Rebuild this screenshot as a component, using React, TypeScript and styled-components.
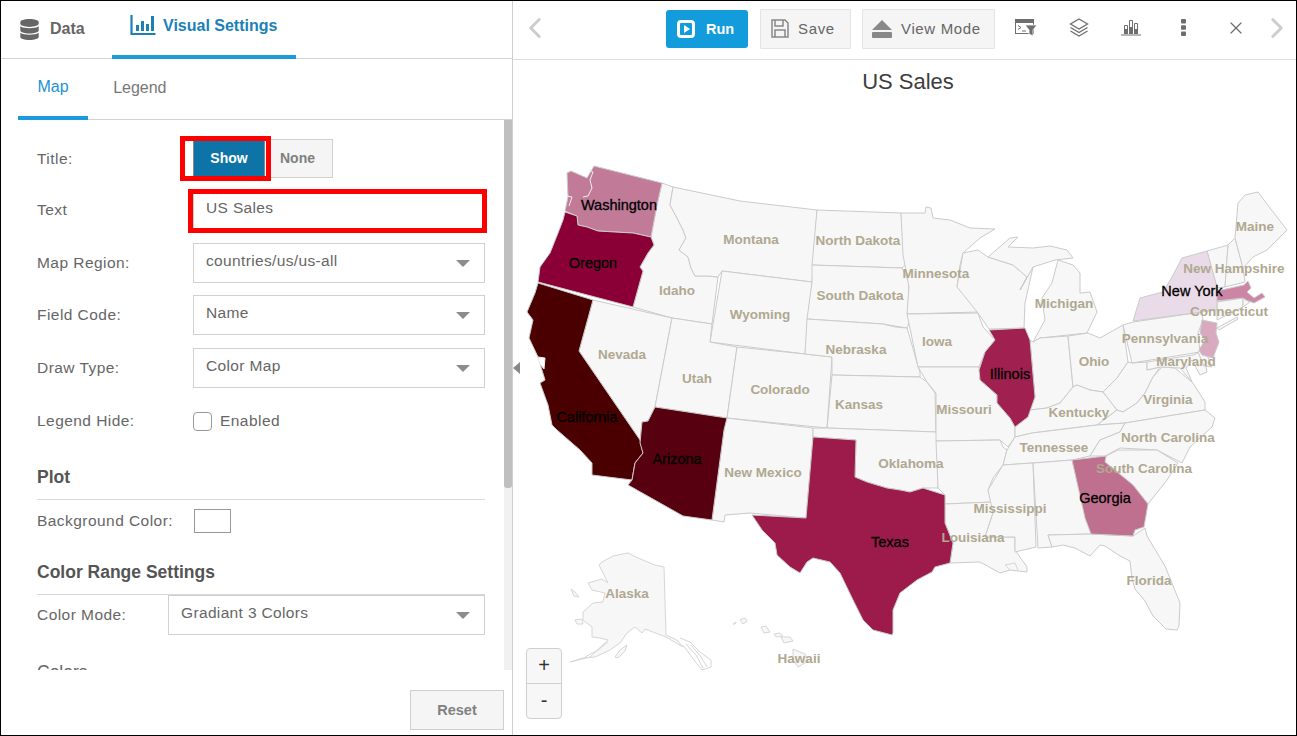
import React from 'react';
import styled, { createGlobalStyle } from 'styled-components';
import { FaDatabase } from 'react-icons/fa';
import { ChevronLeft, ChevronRight, X } from 'lucide-react';

const GlobalStyle = createGlobalStyle`
  html, body {
    margin: 0;
    padding: 0;
    background: #fff;
  }
  body {
    font-family: "Liberation Sans", Arial, sans-serif;
    color: #666;
  }
  * {
    box-sizing: border-box;
  }
`;

const Frame = styled.div`
  width: 1297px;
  height: 736px;
  border: 1px solid #000;
  display: flex;
  overflow: hidden;
`;

const SidePanel = styled.aside`
  width: 512px;
  flex: none;
  border-right: 1px solid #cfcfcf;
  display: flex;
  flex-direction: column;
`;

const TabBar = styled.div`
  height: 58px;
  flex: none;
  display: flex;
  border-bottom: 1px solid #d2d2d2;
`;

const MainTab = styled.div<{ $active?: boolean; $width: number }>`
  width: ${(p) => p.$width}px;
  height: 58px;
  padding: ${(p) => (p.$active ? '0 0 4px 18px' : '0 0 2px 18px')};
  display: flex;
  align-items: center;
  gap: ${(p) => (p.$active ? 7 : 10)}px;
  font-size: 16px;
  font-weight: bold;
  color: ${(p) => (p.$active ? '#1b80b8' : '#666')};
  border-bottom: ${(p) => (p.$active ? '4px solid #1a9cdc' : 'none')};
`;

const SubTabBar = styled.div`
  height: 61px;
  flex: none;
  margin-left: 17px;
  display: flex;
  border-bottom: 1px solid #d2d2d2;
`;

const SubTab = styled.div<{ $active?: boolean }>`
  height: 61px;
  padding: 0 ${(p) => (p.$active ? '19.5px' : '0')};
  margin-left: ${(p) => (p.$active ? '0' : '25px')};
  padding-bottom: ${(p) => (p.$active ? '1px' : '4px')};
  display: flex;
  align-items: center;
  font-size: 16px;
  color: ${(p) => (p.$active ? '#1c93cf' : '#777')};
  border-bottom: ${(p) => (p.$active ? '4px solid #1a9cdc' : 'none')};
`;

const ScrollArea = styled.div`
  height: 550px;
  flex: none;
  display: flex;
`;

const Form = styled.div`
  flex: 1;
  padding: 0 19px 0 36px;
  overflow: hidden;
`;

const Scrollbar = styled.div`
  width: 8px;
  flex: none;
  background: #f1f1f1;
`;

const ScrollThumb = styled.div`
  height: 368px;
  background: #bfbfbf;
  border-radius: 0 0 3px 3px;
`;

const Row = styled.div<{ $top: number; $height?: number }>`
  display: flex;
  align-items: center;
  margin-top: ${(p) => p.$top}px;
  height: ${(p) => p.$height ?? 40}px;
`;

const Label = styled.label<{ $width?: number }>`
  width: ${(p) => p.$width ?? 156}px;
  flex: none;
  font-size: 15.5px;
  letter-spacing: 0.45px;
  color: #666;
`;

const Toggle = styled.div`
  display: flex;
  position: relative;
`;

const ShowButton = styled.div`
  width: 72px;
  height: 36px;
  margin: 1px 1px 0 0;
  background: #0e74a8;
  border-right: 1px solid #888;
  border-left: 1px solid #888;
  color: #fff;
  font-size: 14px;
  font-weight: bold;
  display: flex;
  align-items: center;
  justify-content: center;
`;

const NoneButton = styled.div`
  width: 67px;
  height: 39px;
  padding: 0 4px 2px 0;
  background: #f5f5f5;
  border: 1px solid #d0d0d0;
  color: #808080;
  font-size: 14px;
  font-weight: bold;
  display: flex;
  align-items: center;
  justify-content: center;
`;

const RedMark = styled.span<{ $inset: string }>`
  position: absolute;
  inset: ${(p) => p.$inset};
  border: 5px solid #f00;
  pointer-events: none;
`;

const Field = styled.div`
  position: relative;
  flex: 1;
  height: 40px;
  background: #fff;
  border: 1px solid #d0d0d0;
  padding: 0 12px 4px;
  display: flex;
  align-items: center;
  justify-content: space-between;
  font-size: 15.5px;
  letter-spacing: 0.35px;
  color: #666;
`;

const Arrow = styled.i`
  width: 0;
  height: 0;
  margin: 5px 2px 0 0;
  border-left: 7px solid transparent;
  border-right: 7px solid transparent;
  border-top: 7px solid #8c8c8c;
`;

const Checkbox = styled.span`
  width: 19px;
  height: 19px;
  margin-right: 8px;
  border: 1.5px solid #999;
  border-radius: 4px;
  background: #fff;
`;

const CheckText = styled.span`
  font-size: 15.5px;
  letter-spacing: 0.45px;
  color: #666;
`;

const SectionHead = styled.h3<{ $top: number }>`
  margin: ${(p) => p.$top}px 0 0;
  height: 35px;
  padding-bottom: 10px;
  line-height: 24px;
  font-size: 17.5px;
  font-weight: bold;
  color: #555;
  border-bottom: 1px solid #d8d8d8;
`;

const Swatch = styled.div`
  width: 37px;
  height: 24px;
  margin-left: 1px;
  border: 1px solid #999;
  background: #fff;
`;

const ClippedHead = styled.div`
  margin-top: 25px;
  line-height: 24px;
  font-size: 17.5px;
  color: #666;
`;

const PanelFooter = styled.div`
  flex: 1;
  padding: 20px 8px 0 0;
  display: flex;
  justify-content: flex-end;
  align-items: flex-start;
`;

const ResetButton = styled.div`
  width: 94px;
  height: 40px;
  background: #f5f5f5;
  border: 1px solid #d0d0d0;
  color: #808080;
  font-size: 14.5px;
  font-weight: bold;
  display: flex;
  align-items: center;
  justify-content: center;
`;

const MainPanel = styled.main`
  flex: 1;
  min-width: 0;
  display: flex;
  flex-direction: column;
  position: relative;
`;

const Toolbar = styled.div`
  height: 59px;
  flex: none;
  padding-bottom: 2px;
  display: flex;
  align-items: center;
  border-bottom: 1px solid #ddd;
  color: #777;
`;

const Nav = styled.div<{ $left?: number; $width: number }>`
  width: ${(p) => p.$width}px;
  margin-left: ${(p) => p.$left ?? 0}px;
  padding-bottom: 2px;
  display: flex;
  justify-content: center;
  color: #ccc;

  svg {
    flex: none;
  }
`;

const ToolButton = styled.div<{ $left: number; $width: number; $primary?: boolean }>`
  width: ${(p) => p.$width}px;
  height: ${(p) => (p.$primary ? 38 : 40)}px;
  margin-left: ${(p) => p.$left}px;
  padding-left: ${(p) => (p.$primary ? 11 : 9)}px;
  padding-bottom: ${(p) => (p.$primary ? 0 : 1)}px;
  display: flex;
  align-items: center;
  gap: ${(p) => (p.$primary ? 11 : 9)}px;
  font-size: ${(p) => (p.$primary ? 14.5 : 15)}px;
  letter-spacing: ${(p) => (p.$primary ? 0 : 0.65)}px;
  font-weight: ${(p) => (p.$primary ? 'bold' : 'normal')};
  color: ${(p) => (p.$primary ? '#fff' : '#666')};
  background: ${(p) => (p.$primary ? '#139cdc' : '#f5f5f5')};
  border: ${(p) => (p.$primary ? 'none' : '1px solid #e4e4e4')};
  border-radius: ${(p) => (p.$primary ? '3px' : '1px')};
`;

const IconSlot = styled.div<{ $left?: number }>`
  width: 52.5px;
  margin-left: ${(p) => p.$left ?? 0}px;
  padding-bottom: 3px;
  display: flex;
  justify-content: center;
  color: #6e6e6e;
`;

const ChartTitle = styled.h2`
  margin: 0;
  height: 46px;
  flex: none;
  padding: 9px 0 0 7px;
  line-height: 26px;
  text-align: center;
  font-size: 22px;
  font-weight: normal;
  color: #3d3d3d;
`;

const MapSvg = styled.svg`
  display: block;
  flex: 1;
  width: 783px;
`;

const Region = styled.polygon<{ $fill?: string; $stroke?: string }>`
  fill: ${(p) => p.$fill ?? '#f7f7f7'};
  stroke: ${(p) => p.$stroke ?? '#cbcbcb'};
  stroke-width: 1;
  stroke-linejoin: round;
`;

const Coast = styled.polyline<{ $color?: string }>`
  fill: none;
  stroke: ${(p) => p.$color ?? '#d6d6d6'};
  stroke-width: 1;
  stroke-linejoin: round;
`;

const StateName = styled.text<{ $dark?: boolean }>`
  font-family: "Liberation Sans", Arial, sans-serif;
  font-size: ${(p) => (p.$dark ? 14.5 : 13.5)}px;
  font-weight: ${(p) => (p.$dark ? 'normal' : 'bold')};
  fill: ${(p) => (p.$dark ? '#000' : '#b0a890')};
  stroke: ${(p) => (p.$dark ? '#000' : 'none')};
  stroke-width: 0.3;
  text-anchor: middle;
`;

const ZoomBox = styled.div`
  position: absolute;
  left: 13px;
  top: 647px;
  width: 36px;
  height: 71px;
  background: #f7f7f7;
  border: 1px solid #d0d0d0;
  border-radius: 4px;
`;

const ZoomKey = styled.div<{ $last?: boolean }>`
  height: 34.5px;
  display: flex;
  align-items: center;
  justify-content: center;
  font-size: 20px;
  color: #333;
  border-bottom: ${(p) => (p.$last ? 'none' : '1px solid #d0d0d0')};
`;

const CollapseHandle = styled.i`
  position: absolute;
  left: 0;
  top: 361px;
  width: 0;
  height: 0;
  border-top: 6px solid transparent;
  border-bottom: 6px solid transparent;
  border-right: 7px solid #888;
`;

const BarsIcon = () => (
  <svg width="26" height="22" viewBox="0 0 26 22" style={{ marginBottom: 2 }}>
    <path d="M1.5 1v19h24" fill="none" stroke="currentColor" strokeWidth="2.2" />
    <path d="M6 11h3v6H6zM11 7h3v10h-3zM16 10h3v7h-3zM21 2h3v15h-3z" fill="currentColor" />
  </svg>
);

const RunIcon = () => (
  <svg width="18" height="18" viewBox="0 0 18 18">
    <rect x="1.5" y="1.5" width="15" height="15" rx="2.5" fill="none" stroke="#fff" strokeWidth="3" />
    <path d="M7 5l6 4-6 4z" fill="#fff" />
  </svg>
);

const SaveIcon = () => (
  <svg width="19" height="19" viewBox="0 0 19 19" fill="none" stroke="#888" strokeWidth="1.5">
    <path d="M2 1h13l3 3v14H2z" />
    <path d="M5 1v6h8V1M5 18v-7h10v7" />
  </svg>
);

const EjectIcon = () => (
  <svg width="20" height="18" viewBox="0 0 20 18" fill="#888">
    <path d="M10 0l10 10H0z" />
    <rect y="12" width="20" height="6" rx="1" />
  </svg>
);

const FilterConsoleIcon = () => (
  <svg width="22" height="17" viewBox="0 0 22 17">
    <rect x="0.5" y="0.5" width="18" height="14" fill="none" stroke="currentColor" />
    <rect x="0" y="0" width="19" height="4" fill="currentColor" />
    <path d="M3 6.5l3 2-3 2M7 12h4" fill="none" stroke="currentColor" />
    <path d="M10 6h12l-4 5v6l-4-2v-4z" fill="currentColor" stroke="#fff" strokeWidth="0.8" />
  </svg>
);

const LayersIcon = () => (
  <svg width="20" height="19" viewBox="0 0 20 19" fill="none" stroke="currentColor" strokeWidth="1.3">
    <path d="M10 1l8.5 5-8.5 5-8.5-5z" />
    <path d="M1.5 9.5l8.5 5 8.5-5M1.5 13l8.5 5 8.5-5" />
  </svg>
);

const ColumnsIcon = () => (
  <svg width="20" height="17" viewBox="0 0 20 17">
    <path d="M3.5 6.5h3v8h-3zM8.5 1.5h3v13h-3zM13.5 4.5h3v10h-3z" fill="none" stroke="currentColor" />
    <path d="M3 10h4v5H3zM8 8h4v7H8zM13 10h4v5h-4z" fill="currentColor" />
    <path d="M0 16h20" stroke="currentColor" />
  </svg>
);

const DotsIcon = () => (
  <svg width="5" height="17" viewBox="0 0 5 17" fill="currentColor">
    <rect width="5" height="4.5" rx="1" />
    <rect y="6.2" width="5" height="4.5" rx="1" />
    <rect y="12.5" width="5" height="4.5" rx="1" />
  </svg>
);

const plainStates: [string, string][] = [
  ['Idaho', '662,183 673,187 670,205 677,218 683,230 686,238 679,250 688,257 691,268 695,276 708,276 718,277 712,324 672,318 633,307 643,271 640,267 648,253 654,245 651,237 657,205'],
  ['Montana', '673,187 740,201 817,210 812,282 722,271 718,277 708,276 695,276 691,268 688,257 679,250 686,238 683,230 677,218 670,205'],
  ['Wyoming', '722,271 812,282 805,354 710,342'],
  ['Nevada', '593,300 672,318 655,407 648,421 642,422 640,440 579,351'],
  ['Utah', '672,318 712,324 710,342 737,347 727,418 655,407'],
  ['Colorado', '737,347 805,354 832,357 827,428 727,418'],
  ['New Mexico', '726,418 813,428 813,437 806,518 750,513 725,515 724,522 712,520 724,430'],
  ['North Dakota', '817,210 901,213 903,237 909,262 902,268 812,265'],
  ['South Dakota', '812,265 902,268 909,282 908,313 911,318 907,328 883,324 807,319 812,282'],
  ['Nebraska', '807,319 883,324 895,327 907,328 912,345 917,363 920,372 920,377 832,375 832,357 805,354'],
  ['Kansas', '832,375 920,377 927,382 935,393 936,432 827,428'],
  ['Oklahoma', '827,428 936,432 938,440 938,488 923,488 910,492 900,490 887,488 867,482 855,477 856,440 813,437 813,428'],
  ['Minnesota', '901,213 925,213 926,207 931,208 933,218 950,220 970,228 995,229 980,238 963,253 960,265 957,287 970,300 978,312 907,314 909,287 903,255'],
  ['Iowa', '907,314 978,313 983,327 995,340 985,352 979,367 918,367 913,343'],
  ['Missouri', '918,367 979,367 980,380 997,395 997,403 1010,418 1015,427 1015,437 1008,447 1000,440 936,441 936,393 927,382'],
  ['Arkansas', '936,441 1000,440 1003,447 1007,450 1003,465 993,478 988,490 992,502 945,504 945,495 938,488'],
  ['Louisiana', '945,504 992,502 993,513 985,537 1015,537 1015,550 1027,567 1027,572 1010,570 1000,573 980,562 950,563 953,543 945,523'],
  ['Wisconsin', '963,253 978,250 988,257 1013,265 1027,277 1020,290 1033,267 1025,303 1024,328 989,329 978,313 957,287'],
  ['Upper Michigan', '988,257 1010,238 1018,237 1008,247 1033,248 1050,246 1067,250 1073,258 1055,260 1033,267 1020,290 1027,277 1013,265'],
  ['Lower Michigan', '1058,260 1073,265 1080,273 1080,293 1090,292 1097,312 1087,333 1040,338 1033,342 1045,320 1042,298 1052,283'],
  ['Indiana', '1033,342 1040,338 1068,336 1073,387 1060,403 1047,408 1030,410 1035,397 1030,340'],
  ['Ohio', '1068,336 1088,333 1100,338 1123,325 1128,362 1117,378 1103,392 1090,390 1077,385 1073,387'],
  ['Kentucky', '1073,387 1077,385 1090,390 1103,392 1107,397 1117,410 1097,425 1032,433 1015,437 1015,427 1028,417 1030,410 1047,408 1060,403'],
  ['West Virginia', '1103,392 1117,378 1128,362 1132,363 1147,362 1147,370 1160,367 1153,377 1145,393 1137,403 1123,412 1117,410 1107,397'],
  ['Virginia', '1162,367 1175,368 1193,383 1205,402 1205,410 1125,423 1097,425 1117,410 1123,412 1137,403 1145,393 1153,377'],
  ['Pennsylvania', '1123,325 1133,322 1202,312 1203,320 1198,333 1200,352 1132,363'],
  ['Maryland', '1147,362 1193,355 1200,352 1205,362 1207,372 1200,375 1192,360 1186,368 1192,382 1180,368 1160,367 1147,370'],
  ['Delaware', '1198,352 1205,350 1212,367 1204,366'],
  ['Tennessee', '1015,437 1032,433 1097,425 1125,423 1120,432 1100,440 1090,456 1072,460 1033,463 1003,465 1007,450'],
  ['North Carolina', '1125,423 1205,410 1215,418 1212,427 1190,447 1182,463 1157,450 1120,448 1105,456 1090,456 1100,440 1120,432'],
  ['South Carolina', '1106,456 1118,450 1157,450 1178,463 1167,480 1148,504 1133,485 1105,462'],
  ['Mississippi', '1003,465 1033,463 1036,547 1015,552 1015,537 985,537 993,513 988,490'],
  ['Alabama', '1033,463 1072,460 1087,518 1091,534 1048,535 1052,547 1038,548'],
  ['Florida', '1048,535 1091,534 1133,536 1145,528 1147,536 1165,566 1180,603 1179,626 1177,630 1166,629 1153,616 1145,601 1135,589 1132,579 1130,561 1120,556 1105,546 1100,545 1090,556 1075,548 1063,545 1052,547'],
  ['Vermont', '1207,251 1228,245 1225,287 1217,288'],
  ['New Hampshire', '1228,245 1235,238 1243,268 1245,282 1225,287'],
  ['Maine', '1235,238 1238,203 1245,195 1258,192 1270,208 1287,230 1277,240 1267,250 1253,257 1243,268'],
  ['Connecticut', '1217,302 1243,298 1243,307 1217,320'],
  ['Rhode Island', '1243,298 1250,302 1243,307'],
];

const dataStates: [string, string, string][] = [
  ['Washington', '#c17b99', '594,166 662,183 657,205 651,237 633,233 615,232 598,231 587,227 578,225 577,216 565,211 568,197 567,173 571,171 587,178'],
  ['Oregon', '#8a0036', '565,212 577,216 578,225 587,227 598,231 615,232 633,233 651,237 654,245 648,253 640,267 643,271 633,307 538,282 540,267 550,253 558,233 563,220'],
  ['California', '#4a0000', '538,283 593,300 579,351 640,440 643,453 635,463 632,480 592,475 592,463 580,450 557,430 552,425 548,405 540,383 545,380 538,357 529,338 533,320 527,312 535,293'],
  ['Arizona', '#57000f', '655,407 727,418 724,430 712,520 683,516 628,485 632,480 635,463 643,453 640,443 642,422 648,421'],
  ['Texas', '#9c1b4b', '813,437 856,440 855,477 867,482 887,488 900,490 910,492 923,488 945,495 945,523 953,543 950,563 935,567 932,572 917,580 900,593 893,610 893,633 892,635 873,630 863,620 858,610 853,600 840,573 830,562 813,558 807,562 800,573 790,567 777,555 775,543 762,530 752,515 806,518'],
  ['Illinois', '#a0204f', '989,330 1025,328 1030,340 1035,397 1028,417 1015,427 1010,418 997,403 997,395 980,380 979,370 985,352 995,340'],
  ['New York', '#eadbe8', '1133,321 1140,298 1163,292 1172,277 1182,258 1207,251 1217,287 1217,310 1202,312'],
  ['Massachusetts', '#cd85a6', '1217,291 1244,285 1248,281 1251,288 1247,292 1254,298 1262,293 1265,297 1254,303 1246,300 1243,298 1217,301'],
  ['New Jersey', '#d8a9bf', '1202,320 1217,323 1216,333 1219,342 1213,358 1202,355 1199,350 1205,340 1200,333'],
  ['Georgia', '#c0708f', '1072,460 1106,456 1105,462 1133,485 1148,504 1144,527 1135,530 1133,536 1091,534 1085,518'],
];

const alaska = '599,565 602,562 613,556 628,553 638,558 655,565 664,567 666,635 677,640 683,647 666,637 645,629 642,633 635,627 627,633 620,643 610,650 595,657 583,658 570,662 590,657 608,640 600,638 592,637 592,627 583,620 583,612 593,603 603,602 605,593 592,590 588,583 602,579 608,583 600,567';

const labels: [string, number, number, boolean?][] = [
  ['Washington', 619, 205, true], ['Oregon', 593, 263, true], ['California', 587, 417, true], ['Arizona', 677, 459, true],
  ['Nevada', 622, 354], ['Idaho', 677, 290], ['Montana', 751, 239], ['North Dakota', 858, 240], ['South Dakota', 860, 295],
  ['Wyoming', 760, 314], ['Utah', 697, 378], ['Colorado', 780, 389], ['Nebraska', 856, 349], ['Kansas', 859, 404],
  ['New Mexico', 763, 472], ['Oklahoma', 911, 463], ['Texas', 890, 542, true], ['Louisiana', 973, 537], ['Mississippi', 1010, 508],
  ['Minnesota', 936, 273], ['Iowa', 937, 341], ['Missouri', 964, 409], ['Illinois', 1010, 374, true], ['Michigan', 1064, 303],
  ['Ohio', 1094, 361], ['Kentucky', 1079, 412], ['Tennessee', 1054, 447], ['Pennsylvania', 1165, 338], ['Maryland', 1186, 361],
  ['Virginia', 1168, 399], ['North Carolina', 1168, 437], ['South Carolina', 1144, 468], ['Georgia', 1105, 498, true],
  ['Florida', 1149, 580], ['Maine', 1255, 226], ['New Hampshire', 1234, 268], ['New York', 1192, 291, true],
  ['Connecticut', 1229, 311], ['Alaska', 627, 593], ['Hawaii', 799, 658],
];

const islands = [
  '740,620 745,618 747,621 743,624',
  '733,624 736,622 735,624',
  '761,627 766,626 770,632 764,633',
  '774,634 780,633 783,636 776,637',
  '781,637 790,637 793,641 784,643',
  '793,649 805,654 808,661 798,667 793,660',
  '575,620 582,619 583,624 577,624',
  '571,589 575,592 579,597 574,596',
  '615,657 620,650 627,645 625,651 618,658',
];

function UsMap() {
  return (
    <MapSvg viewBox="513 106 783 629">
      {plainStates.map(([name, points]) => <Region key={name} points={points} />)}
      {dataStates.map(([name, fill, points]) => <Region key={name} $fill={fill} points={points} />)}
      <Region points="1217,328 1237,317 1238,319 1219,330" />
      <Region $fill="#fff" $stroke="#eee" points="538,357 545,358 544,369 540,364" />
      <Coast $color="#eee" points="589,170 593,172 590,180 592,188 588,196 583,197" />
      <Coast $color="#eee" points="567,196 572,197 569,206" />
      <Coast points="1010,570 1005,565 1015,563 1018,570" />
      <Region $stroke="#d6d6d6" points={alaska} />
      <Coast points="680,638 690,642 700,652 711,660 711,667 702,670 694,660 683,645" />
      <Coast points="686,644 696,655 703,668" />
      <Coast points="691,645 701,657 707,667" />
      <Coast points="608,642 598,650 585,657" />
      {islands.map((points) => <Region key={points} $stroke="#d6d6d6" points={points} />)}
      {labels.map(([name, x, y, dark]) => (
        <StateName key={name} $dark={dark} x={x} y={y + 4.5}>{name}</StateName>
      ))}
    </MapSvg>
  );
}

export default function App() {
  return (
    <>
      <GlobalStyle />
      <Frame>
        <SidePanel>
          <TabBar>
            <MainTab $width={111}><FaDatabase size={21} color="#666" />Data</MainTab>
            <MainTab $width={184} $active><BarsIcon />Visual Settings</MainTab>
          </TabBar>
          <SubTabBar>
            <SubTab $active>Map</SubTab>
            <SubTab>Legend</SubTab>
          </SubTabBar>
          <ScrollArea>
            <Form>
              <Row $top={19} $height={39}>
                <Label>Title:</Label>
                <Toggle>
                  <ShowButton>Show</ShowButton>
                  <NoneButton>None</NoneButton>
                  <RedMark $inset="-3px 62px -3px -13px" />
                </Toggle>
              </Row>
              <Row $top={12}>
                <Label>Text</Label>
                <Field>
                  US Sales
                  <RedMark $inset="-2px -3px -4px -6px" />
                </Field>
              </Row>
              <Row $top={13}>
                <Label>Map Region:</Label>
                <Field>countries/us/us-all<Arrow /></Field>
              </Row>
              <Row $top={12}>
                <Label>Field Code:</Label>
                <Field>Name<Arrow /></Field>
              </Row>
              <Row $top={13}>
                <Label>Draw Type:</Label>
                <Field>Color Map<Arrow /></Field>
              </Row>
              <Row $top={23} $height={20}>
                <Label>Legend Hide:</Label>
                <Checkbox />
                <CheckText>Enabled</CheckText>
              </Row>
              <SectionHead $top={34}>Plot</SectionHead>
              <Row $top={9} $height={24}>
                <Label>Background Color:</Label>
                <Swatch />
              </Row>
              <SectionHead $top={27}>Color Range Settings</SectionHead>
              <Row $top={0}>
                <Label $width={131}>Color Mode:</Label>
                <Field>Gradiant 3 Colors<Arrow /></Field>
              </Row>
              <ClippedHead>Colors</ClippedHead>
            </Form>
            <Scrollbar><ScrollThumb /></Scrollbar>
          </ScrollArea>
          <PanelFooter><ResetButton>Reset</ResetButton></PanelFooter>
        </SidePanel>
        <MainPanel>
          <CollapseHandle />
          <Toolbar>
            <Nav $left={9} $width={26}><ChevronLeft size={34} strokeWidth={2} /></Nav>
            <ToolButton $left={118} $width={82} $primary><RunIcon />Run</ToolButton>
            <ToolButton $left={12} $width={91}><SaveIcon />Save</ToolButton>
            <ToolButton $left={11} $width={133}><EjectIcon />View Mode</ToolButton>
            <IconSlot $left={5}><FilterConsoleIcon /></IconSlot>
            <IconSlot><LayersIcon /></IconSlot>
            <IconSlot><ColumnsIcon /></IconSlot>
            <IconSlot><DotsIcon /></IconSlot>
            <IconSlot><X size={20} strokeWidth={1.5} /></IconSlot>
            <Nav $width={28}><ChevronRight size={34} strokeWidth={2} /></Nav>
          </Toolbar>
          <ChartTitle>US Sales</ChartTitle>
          <UsMap />
          <ZoomBox>
            <ZoomKey>+</ZoomKey>
            <ZoomKey $last>-</ZoomKey>
          </ZoomBox>
        </MainPanel>
      </Frame>
    </>
  );
}
